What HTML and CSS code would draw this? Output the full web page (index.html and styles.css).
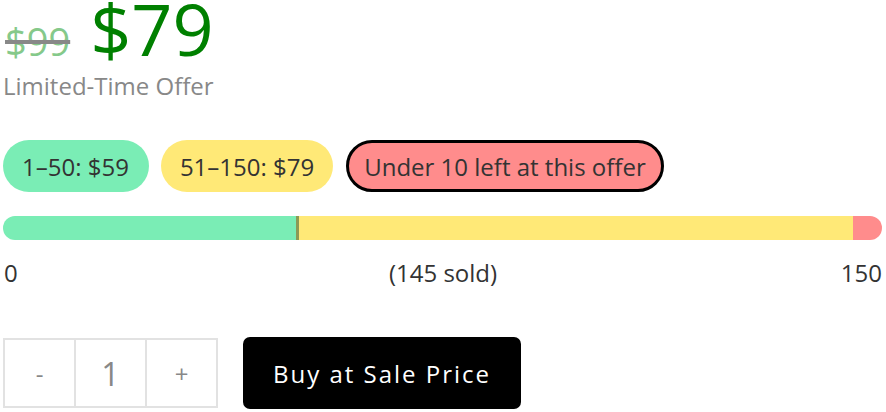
FILE: index.html
```html
<!DOCTYPE html>
<html>
<head>
<meta charset="utf-8">
<link rel="stylesheet" href="styles.css">
</head>
<body>
<div class="wrap">
  <div class="price-row">
    <span class="old">$99</span>
    <span class="new">$79</span>
  </div>
  <div class="note">Limited-Time Offer</div>
  <div class="tiers">
    <span class="chip green">1–50: $59</span>
    <span class="chip yellow">51–150: $79</span>
    <span class="chip red">Under 10 left at this offer</span>
  </div>
  <div class="bar">
    <div class="seg g" style="width:33.333%"></div>
    <div class="mark"></div>
    <div class="seg y" style="flex:1"></div>
    <div class="seg r" style="width:3.333%"></div>
  </div>
  <div class="labels">
    <span class="l">0</span>
    <span class="c">(145 sold)</span>
    <span class="r-lab">150</span>
  </div>
  <div class="actions">
    <div class="qty">
      <span class="cell btn">-</span>
      <span class="cell num">1</span>
      <span class="cell btn">+</span>
    </div>
    <button class="buy">Buy at Sale Price</button>
  </div>
</div>
</body>
</html>
```
FILE: styles.css
```css
html, body { margin: 0; padding: 0; background: #fff; }
body { font-family: "Open Sans", sans-serif; color: #333; }
.wrap { padding: 0 4px 0 3px; }
.price-row { display: flex; align-items: baseline; gap: 20px; height: 66px; margin-top: -10px; }
.old { font-size: 38px; color: #85c98a; text-decoration: line-through; text-decoration-color: #888; text-decoration-thickness: 4px; padding-left: 2px; }
.new { font-size: 72px; color: #008000; line-height: 76px; }
.note { font-size: 24px; color: #888; line-height: 32px; margin-top: 14px; }
.tiers { display: flex; gap: 12px; margin-top: 38px; }
.chip { display: inline-flex; align-items: center; height: 52px; box-sizing: border-box; padding: 0 20px 0 19px; border-radius: 26px; font-size: 24px; color: #333; }
.green { background: #7aedb5; }
.yellow { background: #ffe977; padding: 0 19px 0 19px; }
.red { background: #ff8c8c; border: 3px solid #000; padding: 0 15px; margin-left: 1px; }
.bar { display: flex; height: 24px; border-radius: 12px; overflow: hidden; margin-top: 24px; }
.seg.g { background: #7aedb5; }
.seg.y { background: #ffe977; }
.seg.r { background: #ff8c8c; }
.mark { width: 3px; background: #8c9a55; }
.labels { display: grid; grid-template-columns: 1fr auto 1fr; font-size: 24px; line-height: 32px; margin-top: 17px; padding-left: 1px; }
.labels .c { text-align: center; }
.labels .r-lab { text-align: right; }
.actions { display: flex; align-items: center; gap: 25px; margin-top: 48px; }
.qty { display: flex; border: 2px solid #e2e2e2; }
.cell { width: 69px; height: 66px; display: flex; align-items: center; justify-content: center; color: #888; }
.cell + .cell { border-left: 2px solid #e2e2e2; }
.btn { font-size: 24px; }
.num { font-size: 32px; }
.buy { height: 72px; width: 278px; background: #000; color: #fff; border: none; border-radius: 7px; font-family: "Open Sans", sans-serif; font-size: 24px; letter-spacing: 2px; padding: 0; }
```
